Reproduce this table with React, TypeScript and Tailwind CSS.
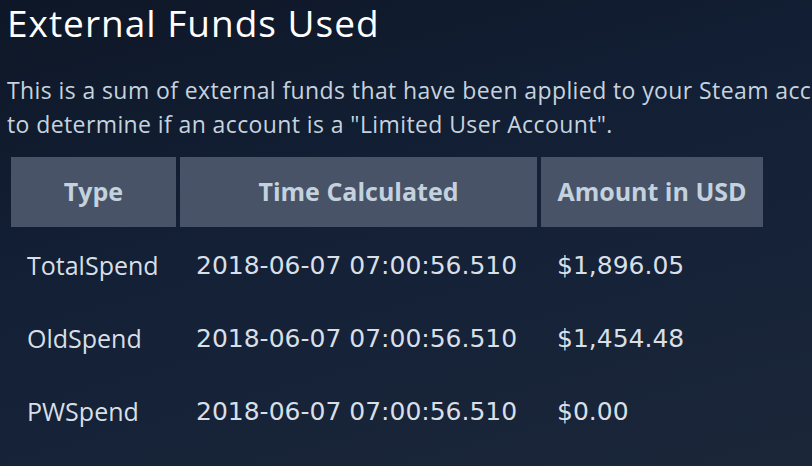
import React from "react";

const rows = [
  { type: "TotalSpend", time: "2018-06-07 07:00:56.510", amount: "$1,896.05" },
  { type: "OldSpend", time: "2018-06-07 07:00:56.510", amount: "$1,454.48" },
  { type: "PWSpend", time: "2018-06-07 07:00:56.510", amount: "$0.00" },
];

export default function App() {
  return (
    <div className="w-[812px] h-[466px] overflow-hidden bg-[linear-gradient(165deg,#0e1727_0%,#132036_45%,#1b2639_100%)] font-['Open_Sans',sans-serif] pl-[7px] pt-[2px]">
      <h1 className="text-[37px] leading-[42px] tracking-[1px] text-white whitespace-nowrap">
        External Funds Used
      </h1>
      <p className="mt-[29px] text-[23px] leading-[34px] tracking-[0.4px] text-[#c6d3de] whitespace-nowrap">
        This is a sum of external funds that have been applied to your Steam account. This is used
        <br />
        to determine if an account is a "Limited User Account".
      </p>
      <div className="mt-[16px] ml-[4px] grid grid-cols-[165px_357px_222px] gap-x-[4px] gap-y-[4px]">
        {["Type", "Time Calculated", "Amount in USD"].map((h) => (
          <div
            key={h}
            className="h-[70px] bg-[#485368] flex items-center justify-center text-[25px] font-bold text-[#c4d2de]"
          >
            {h}
          </div>
        ))}
        {rows.map((r) => (
          <React.Fragment key={r.type}>
            <div className="h-[69px] flex items-center pl-4 text-[25px] text-[#d8dfe6] whitespace-nowrap">
              {r.type}
            </div>
            <div className="h-[69px] flex items-center pl-4 text-[25px] text-[#d8dfe6] whitespace-nowrap font-['DejaVu_Sans',sans-serif]">
              {r.time}
            </div>
            <div className="h-[69px] flex items-center pl-4 text-[25px] text-[#d8dfe6] whitespace-nowrap font-['DejaVu_Sans',sans-serif]">
              {r.amount}
            </div>
          </React.Fragment>
        ))}
      </div>
    </div>
  );
}
